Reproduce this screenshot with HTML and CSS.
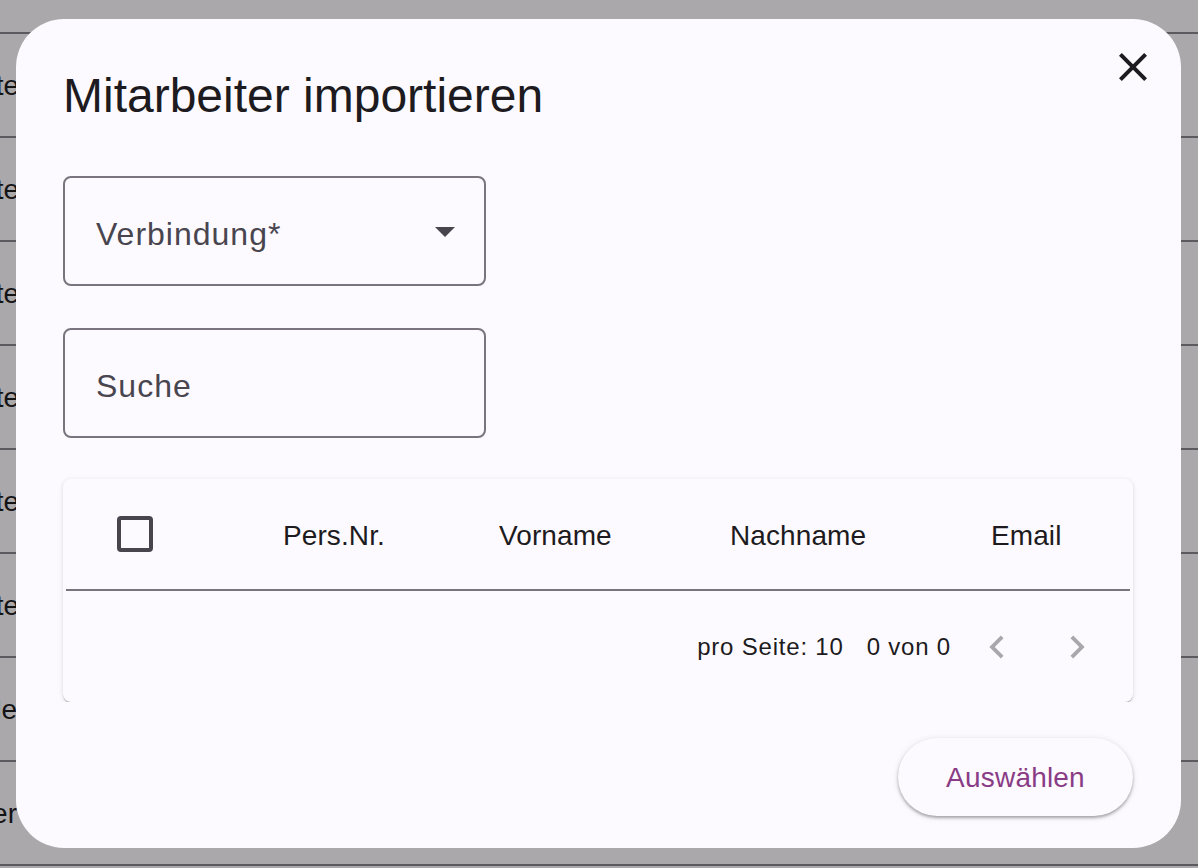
FILE: index.html
```html
<!DOCTYPE html>
<html lang="de">
<head>
  <meta charset="utf-8">
  <title>Mitarbeiter importieren</title>
  <link rel="stylesheet" href="styles.css">
</head>
<body>
  <div class="page">
    <div class="bg-row bg-head"></div>
    <div class="bg-row"><div class="bg-cell">Angestellte</div></div>
    <div class="bg-row"><div class="bg-cell">Angestellte</div></div>
    <div class="bg-row"><div class="bg-cell">Angestellte</div></div>
    <div class="bg-row"><div class="bg-cell">Angestellte</div></div>
    <div class="bg-row"><div class="bg-cell">Angestellte</div></div>
    <div class="bg-row"><div class="bg-cell">Angestellte</div></div>
    <div class="bg-row"><div class="bg-cell short">Neue Stelle</div></div>
    <div class="bg-row"><div class="bg-cell short">Manager</div></div>
  </div>

  <div class="dialog">
    <button class="close" type="button" aria-label="Schließen">
      <svg width="48" height="48" viewBox="0 0 24 24"><path d="M19 6.41L17.59 5 12 10.59 6.41 5 5 6.41 10.59 12 5 17.59 6.41 19 12 13.41 17.59 19 19 17.59 13.41 12z"/></svg>
    </button>

    <div class="dialog-head">
      <h2>Mitarbeiter importieren</h2>
    </div>

    <div class="dialog-content">
      <div class="field">
        <span class="field-label">Verbindung*</span>
        <svg width="20" height="10" viewBox="0 0 20 10"><polygon points="0,0 20,0 10,10"/></svg>
      </div>
      <div class="field second">
        <span class="field-label">Suche</span>
      </div>

      <div class="card">
        <div class="table-head">
          <div class="col col-check"><span class="checkbox"></span></div>
          <div class="col col-nr">Pers.Nr.</div>
          <div class="col col-vor">Vorname</div>
          <div class="col col-nach">Nachname</div>
          <div class="col">Email</div>
        </div>
        <div class="divider"></div>
        <div class="paginator">
          <span class="per-page">pro Seite: 10</span>
          <span class="range">0 von 0</span>
          <svg class="nav" width="46" height="46" viewBox="0 0 24 24"><path d="M15.41 7.41L14 6l-6 6 6 6 1.41-1.41L10.83 12z"/></svg>
          <svg class="nav" width="46" height="46" viewBox="0 0 24 24"><path d="M10 6L8.59 7.41 13.17 12l-4.58 4.59L10 18l6-6z"/></svg>
        </div>
      </div>
    </div>

    <div class="dialog-actions">
      <button class="btn" type="button">Auswählen</button>
    </div>
  </div>
</body>
</html>
```

FILE: styles.css
```css
body {
  margin: 0;
  padding: 0;
  width: 1198px;
  height: 868px;
  overflow: hidden;
  background-color: #aaa8ab;
  font-family: "Liberation Sans", Arial, sans-serif;
  position: relative;
}

/* Tabelle im Hintergrund (abgedunkelt) */
.page {
  width: 100%;
}
.bg-row {
  height: 102px;
  border-bottom: 2px solid #5d5a5f;
  display: flex;
  align-items: center;
}
.bg-head {
  height: 32px;
}
.bg-cell {
  width: 19px;
  display: flex;
  justify-content: flex-end;
  white-space: nowrap;
  font-size: 28px;
  color: #141315;
  margin-top: 2px;
}
.bg-cell.short {
  width: 17px;
}

/* Dialog */
.dialog {
  position: absolute;
  left: 16px;
  top: 19px;
  width: 1165px;
  box-sizing: border-box;
  padding: 45px 0 32px 0;
  background-color: #fcfaff;
  border-radius: 48px;
  display: flex;
  flex-direction: column;
}
.close {
  position: absolute;
  top: 24px;
  right: 24px;
  width: 48px;
  height: 48px;
  padding: 0;
  border: none;
  background: none;
  cursor: pointer;
}
.close svg {
  display: block;
  fill: #1d1b20;
}
.dialog-head {
  padding: 0 48px 0 47px;
}
h2 {
  margin: 0;
  font-size: 48px;
  line-height: 64px;
  font-weight: 400;
  color: #1d1b20;
}
.dialog-content {
  padding: 0 48px 0 47px;
  overflow: hidden;
  display: flex;
  flex-direction: column;
  align-items: flex-start;
}

.field {
  width: 423px;
  height: 110px;
  margin-top: 48px;
  box-sizing: border-box;
  border: 2px solid #79747e;
  border-radius: 8px;
  padding: 0 29px 0 31px;
  display: flex;
  align-items: center;
  justify-content: space-between;
  font-size: 32px;
  letter-spacing: 1px;
  color: #49454f;
}
.field-label {
  margin-top: 7px;
}
.field svg {
  fill: #49454f;
  margin-top: 2px;
}
.field.second {
  margin-top: 42px;
}

/* Tabelle */
.card {
  align-self: stretch;
  margin-top: 41px;
  background-color: #fcfaff;
  border-radius: 8px;
  box-shadow: 0 2px 1px -1px rgba(0, 0, 0, 0.2), 0 1px 1px 0 rgba(0, 0, 0, 0.14), 0 1px 5px 0 rgba(0, 0, 0, 0.12);
}
.table-head {
  height: 110px;
  display: flex;
  align-items: center;
  font-size: 28px;
  letter-spacing: 0.1px;
  color: #1d1b20;
}
.col {
  margin-top: 3px;
}
.col-check {
  width: 220px;
  box-sizing: border-box;
  padding-left: 54px;
  display: flex;
  margin-top: 0;
}
.checkbox {
  width: 36px;
  height: 36px;
  box-sizing: border-box;
  border: 4px solid #49454f;
  border-radius: 4px;
}
.col-nr {
  width: 216px;
}
.col-vor {
  width: 231px;
}
.col-nach {
  width: 261px;
}
.divider {
  height: 2px;
  margin: 0 3px;
  background-color: #79747e;
}
.paginator {
  height: 111px;
  display: flex;
  align-items: center;
  justify-content: flex-end;
  padding-right: 33px;
  font-size: 24px;
  letter-spacing: 0.8px;
  color: #1d1b20;
}
.per-page {
  margin-right: 23px;
}
.range {
  margin-right: 23px;
}
.nav {
  display: block;
  fill: #a9a7ab;
}
.nav + .nav {
  margin-left: 34px;
}

/* Aktionen */
.dialog-actions {
  padding: 0 48px 0 47px;
  margin-top: 36px;
  display: flex;
  justify-content: flex-end;
}
.btn {
  width: 235px;
  height: 78px;
  padding: 2px 0 0 0;
  border: none;
  border-radius: 39px;
  background-color: #fcfaff;
  color: #893c85;
  font-family: "Liberation Sans", Arial, sans-serif;
  font-size: 28px;
  letter-spacing: 0.2px;
  cursor: pointer;
  box-shadow: 0 2px 3px rgba(0, 0, 0, 0.3), 0 1px 6px 1px rgba(0, 0, 0, 0.08);
}
```
